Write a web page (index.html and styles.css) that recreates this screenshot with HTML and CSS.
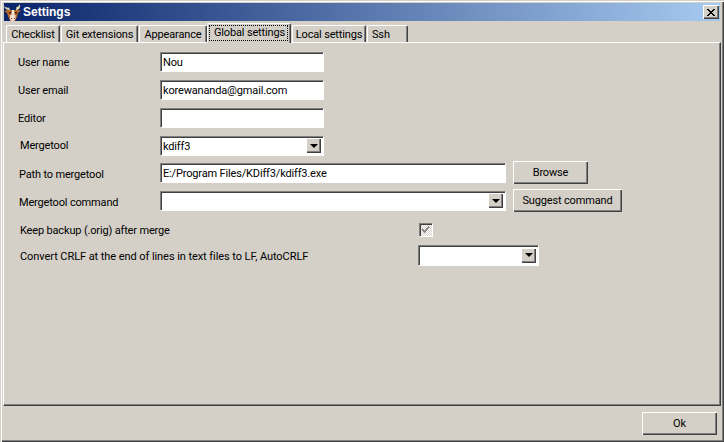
FILE: index.html
```html
<!DOCTYPE html>
<html lang="en">
<head>
<meta charset="utf-8">
<title>Settings</title>
<link rel="stylesheet" href="styles.css">
</head>
<body>
<div class="window">
  <div class="titlebar">
    <svg class="appicon" width="17" height="17" viewBox="0 0 17 17">
      <path d="M0 2 C1 5 3 6 6 6 L5 3.500 C3.500 4 1.500 3.500 0 2Z" fill="#e8d8b0"/>
      <path d="M16 0 C16.500 4 15 6 12 6 L12.500 3 C14 3 15 2 16 0Z" fill="#e8d8b0"/>
      <path d="M0 7 L4 6 L13 6 L17 6.500 L14 9 L13 13 L11 17 L6 17 L4 12 L3 9Z" fill="#b8682c"/>
      <path d="M8 6 L10 6 L10.500 11 L7.500 11Z" fill="#f4e8d8"/>
      <path d="M6 11 L11.500 11 L11.500 15 L10 17 L7 17 L6 15Z" fill="#f0dccc"/>
      <path d="M5 8 h2 v1.500 h-2Z M11 8 h2 v1.500 h-2Z" fill="#3a1c10"/>
      <path d="M7 14 h1 v1 h-1Z M10 14 h1 v1 h-1Z" fill="#8a4a38"/>
    </svg>
    <span class="title">Settings</span>
    <button class="close" type="button" aria-label="Close">
      <svg width="8" height="7" viewBox="0 0 8 7"><path d="M0 0h2v1h1v1h2V1h1V0h2v1H7v1H6v1H5v1h1v1h1v1h1v1H6V6H5V5H3v1H2v1H0V6h1V5h1V4h1V3H2V2H1V1H0Z" fill="#000"/></svg>
    </button>
  </div>

  <div class="tabs">
    <div class="tab tab-checklist">Checklist</div>
    <div class="tab tab-git">Git extensions</div>
    <div class="tab tab-appearance">Appearance</div>
    <div class="tab tab-active"><span class="focus">Global settings</span></div>
    <div class="tab tab-local">Local settings</div>
    <div class="tab tab-ssh">Ssh</div>
  </div>

  <div class="page">
    <div class="row row-name">
      <label class="label label-a">User name</label>
      <div class="field short">Nou</div>
    </div>
    <div class="row row-std">
      <label class="label label-a">User email</label>
      <div class="field short">korewananda@gmail.com</div>
    </div>
    <div class="row row-std">
      <label class="label label-a">Editor</label>
      <div class="field short"></div>
    </div>
    <div class="row row-std">
      <label class="label label-c">Mergetool</label>
      <div class="field short combo"><span class="value">kdiff3</span><span class="arrow"><i></i></span></div>
    </div>
    <div class="row row-path">
      <label class="label label-b">Path to mergetool</label>
      <div class="field long">E:/Program Files/KDiff3/kdiff3.exe</div>
      <button class="btn btn-browse" type="button">Browse</button>
    </div>
    <div class="row row-cmd">
      <label class="label label-b">Mergetool command</label>
      <div class="field long combo"><span class="value"></span><span class="arrow"><i></i></span></div>
      <button class="btn btn-suggest" type="button">Suggest command</button>
    </div>
    <div class="row row-backup">
      <label class="label wide">Keep backup (.orig) after merge</label>
      <span class="check">
        <svg width="9" height="9" viewBox="0 0 9 9"><path d="M1 4 L3.500 7 L8 1.500" fill="none" stroke="#808080" stroke-width="1.600"/></svg>
      </span>
    </div>
    <div class="row row-crlf">
      <label class="label wide label-long">Convert CRLF at the end of lines in text files to LF, AutoCRLF</label>
      <div class="field crlf combo"><span class="value"></span><span class="arrow"><i></i></span></div>
    </div>
  </div>

  <div class="footer">
    <button class="btn btn-ok" type="button">Ok</button>
  </div>
</div>
</body>
</html>
```
FILE: styles.css
```css
* { box-sizing: border-box; }
html, body { margin: 0; padding: 0; }
body {
  width: 724px;
  height: 442px;
  overflow: hidden;
  background: #d4d0c8;
  font-family: Roboto, "Liberation Sans", Arial, sans-serif;
  font-size: 11px;
  letter-spacing: -0.16px;
  color: #000;
}
.window {
  width: 724px;
  height: 442px;
  display: flex;
  flex-direction: column;
  background: #d4d0c8;
  padding: 3px 3px 2px 3px;
  box-shadow: inset 1px 1px 0 #d4d0c8, inset 2px 2px 0 #fff, inset -1px -1px 0 #404040, inset -2px -2px 0 #808080;
}
.titlebar {
  height: 18px;
  flex: none;
  display: flex;
  align-items: center;
  padding: 0 1px 0 0;
  margin: 0 1px 0 1px;
  background: linear-gradient(to right, #0a246a, #a6caf0);
  color: #fff;
}
.appicon { flex: none; margin-right: 2px; }
.title {
  font-family: "Liberation Sans", Arial, sans-serif;
  font-size: 12px;
  font-weight: bold;
  letter-spacing: 0;
  flex: 1;
}
.close {
  width: 16px;
  height: 14px;
  padding: 0;
  display: flex;
  align-items: center;
  justify-content: center;
  background: #d4d0c8;
  border: 0;
  box-shadow: inset 1px 1px 0 #fff, inset -1px -1px 0 #404040, inset -2px -2px 0 #808080;
}
.tabs {
  flex: none;
  height: 21px;
  display: flex;
  align-items: flex-end;
  padding-left: 3px;
}
.tab {
  height: 17px;
  display: flex;
  align-items: center;
  justify-content: center;
  background: #d4d0c8;
  border-top: 1px solid #fff;
  border-left: 1px solid #fff;
  border-right: 1px solid #404040;
  box-shadow: inset -1px 0 0 #808080;
  border-top-left-radius: 2px;
  border-top-right-radius: 2px;
  margin-right: 1px;
}
.tab-checklist { width: 54px; }
.tab-git { width: 77px; }
.tab-appearance { width: 68px; }
.tab-active {
  width: 84px;
  height: 20px;
  margin: 0 0 -1px -1px;
  padding: 0 0 1px 1px;
  justify-content: flex-start;
  position: relative;
  z-index: 1;
}
.tab-local { width: 74px; margin-left: 1px; }
.tab-ssh { width: 41px; justify-content: flex-start; padding-left: 4px; }
.focus {
  display: block;
  width: 79px;
  outline: 1px dotted #000;
  outline-offset: -1px;
  padding-left: 5px;
  line-height: 16px;
}
.page {
  flex: 1;
  padding: 9px 0 0 14px;
  border-top: 1px solid #fff;
  border-left: 1px solid #fff;
  border-right: 1px solid #404040;
  border-bottom: 1px solid #404040;
  box-shadow: inset -1px -1px 0 #808080;
}
.row { display: flex; align-items: center; }
.row-name { height: 19px; }
.row-std { height: 19px; margin-top: 9px; }
.row-path { height: 23px; margin-top: 6px; }
.row-cmd { height: 23px; margin-top: 5px; }
.row-backup { height: 13px; margin-top: 11px; }
.row-crlf { height: 20px; margin-top: 9px; }
.label { flex: none; width: 142px; padding-top: 2px; }
.label-a { padding-left: 0; }
.label-b { padding-left: 1px; padding-top: 4px; }
.label-c { padding-left: 2px; padding-top: 0; }
.wide { width: 401px; padding-left: 2px; }
.label-long { letter-spacing: -0.07px; }
.field {
  flex: none;
  height: 19px;
  display: flex;
  align-items: center;
  padding: 1px 0 0 3px;
  background: #fff;
  box-shadow: inset 1px 1px 0 #808080, inset 2px 2px 0 #404040, 1px 1px 0 #fff;
  border: 0;
}
.short { width: 163px; }
.long { width: 345px; }
.crlf { width: 120px; height: 20px; margin-left: -1px; }
.combo { justify-content: space-between; padding: 0 2px 0 3px; }
.value { padding-top: 1px; }
.arrow {
  width: 15px;
  height: 15px;
  display: flex;
  align-items: center;
  justify-content: center;
  background: #d4d0c8;
  box-shadow: inset 1px 1px 0 #fff, inset -1px -1px 0 #404040, inset -2px -2px 0 #808080;
}
.arrow i {
  display: block;
  width: 0;
  height: 0;
  border-left: 4px solid transparent;
  border-right: 4px solid transparent;
  border-top: 4px solid #000;
}
.btn {
  font: inherit;
  letter-spacing: inherit;
  color: #000;
  padding: 0;
  border: 0;
  background: #d4d0c8;
  box-shadow: inset 1px 1px 0 #fff, inset -1px -1px 0 #404040, inset -2px -2px 0 #808080;
  flex: none;
}
.btn-browse { width: 75px; height: 23px; margin-left: 8px; }
.btn-suggest { width: 109px; height: 23px; margin-left: 8px; }
.check {
  flex: none;
  width: 13px;
  height: 13px;
  display: flex;
  align-items: center;
  justify-content: center;
  background: repeating-conic-gradient(#fff 0 25%, #d4d0c8 0 50%) 0 0 / 2px 2px;
  box-shadow: inset 1px 1px 0 #808080, inset 2px 2px 0 #404040, 1px 1px 0 #fff;
}
.footer {
  flex: none;
  height: 34px;
  display: flex;
  justify-content: flex-end;
  align-items: flex-start;
  padding: 6px 4px 0 0;
}
.btn-ok { width: 75px; height: 23px; }
```
